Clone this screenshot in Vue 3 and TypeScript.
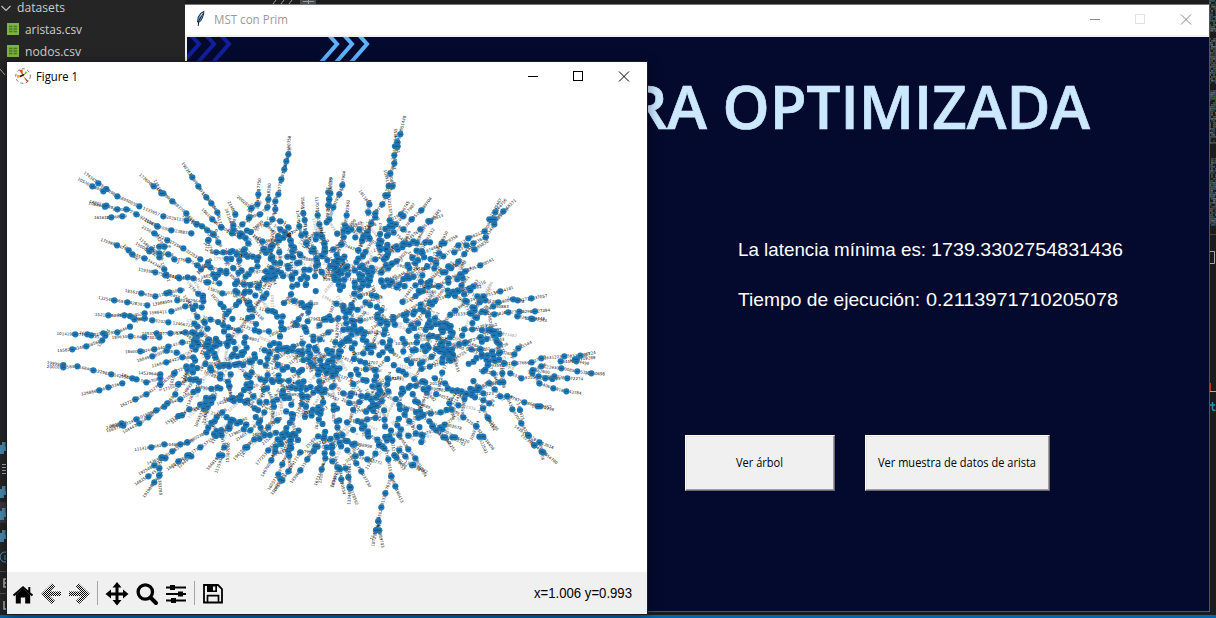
<script setup lang="ts">
type Pt = [number, number]
interface Tag { x: number; y: number; a: number; t: string; faint: boolean }

// Branches of the tree, listed from the outer tip inwards, in thirds of a pixel.
const branches: { ox: number; oy: number; lines: string[] }[] = [
  { ox: 30, oy: 100, lines: [
    '778,112 775,163 769,184 763,208 754,238 745,283 736,304 736,328 727,358 751,364 775,382',
    '460,192 487,232 505,259 529,292 544,310 562,337 574,382',
    '333,226 371,259 400,280 427,304 469,340 500,373 516,379 532,391 550,403 565,427',
    '375,240 394,280', '163,218 205,250 229,267 262,289 328,319 400,349 470,362',
    '148,238 187,259 220,274', '183,305 229,317 262,328 289,328 319,343 382,379 424,391 484,400',
    '180,310 225,320', '193,352 244,352 277,349', '345,360 382,379', '337,380 373,400 412,421 460,445 511,478',
    '217,420 261,436 296,451 307,463 343,475 403,508 409,524 448,535 490,535 530,547 568,550',
    '318,430 358,454 388,472', '330,415 364,448 388,460 415,463 433,478 475,481 502,496 541,502 571,512',
    '375,400 403,440 388,440', '326,508 376,517 406,526 446,532 473,532', '536,485 550,523 589,520',
    '290,573 334,580 376,589 418,577 451,571', '206,593 253,601 292,607 352,616 442,601 520,604',
    '400,577 409,580', '196,643 235,646 283,646 300,648 344,640 424,634 466,619 515,622',
    '280,640 313,658 367,661 415,667 502,679 532,686', '300,655 344,655',
    '85,701 136,703 172,703 184,706 220,700 262,697 300,680', '340,700 380,700 421,700 466,697 487,697',
    '250,712 302,709 343,712 388,712', '688,240 685,283 682,313 664,325', '718,255 715,298 712,322 690,343 658,352',
    '626,293 664,325 657,355 637,373', '597,305 616,343 610,376 630,406 655,430 640,454 628,481',
    '520,330 547,358 574,382 606,400 630,409', '818,295 820,340 824,360 826,400 829,430',
    '860,295 863,346 868,373 875,409 883,430 886,455', '903,232 895,277 898,298 896,316 890,367',
    '803,335 808,379 814,406', '727,395 724,439 724,472 733,487', '460,345 500,373', '590,330 610,390 632,400',
    '750,500 751,388 764,397 781,421 784,436 787,454 811,466', '545,460 535,421', '540,455 559,457 580,457 600,457',
    '538,565 577,580 622,577', '673,410 700,448 685,472', '676,385 710,373', '673,408 697,424 745,421'] },
  { ox: 320, oy: 100, lines: [
    '253,52 241,103 232,127 233,139 223,166 223,190 211,220 218,258 203,286 187,313 166,340 154,370 142,397 127,418 115,451',
    '227,90 225,139', '195,210 206,258 196,286', '72,218 67,256 58,283 40,322 28,358', '33,235 31,280 27,298 25,316',
    '122,275 148,313 145,337 166,352', '85,300 80,346 75,376 94,388', '330,297 304,331 275,358 250,388 227,373',
    '265,305 243,343 209,361 208,379', '280,315 250,349 218,380', '357,333 331,364 301,388 250,430 229,439 199,469 166,478',
    '368,345 325,363', '338,390 316,427 305,454 277,473 286,490', '408,410 373,430 307,460', '380,395 365,430 358,460',
    '557,298 526,337 516,358 494,394 445,415 415,436 370,469 322,499 268,535', '540,300 508,358',
    '583,303 550,334 523,373 497,412 460,430 433,462 415,485 385,499 368,517', '560,330 523,358',
    '500,425 463,448 440,436 403,457', '520,478 481,496 436,514 421,523 385,535 355,559 325,559 298,577',
    '492,547 460,559 451,571 415,574 385,586 330,607 280,643', '480,560 448,565 400,575',
    '575,563 541,574 490,589 440,604 406,632', '677,588 634,595 593,601 580,598 535,607 496,601 472,589',
    '685,630 645,634 598,635 565,637 523,643 496,637 450,640 391,644', '670,656 634,656 592,649', '680,662 638,657',
    '565,620 520,619 466,652', '540,690 514,694 482,712', '530,715 514,694', '508,640 513,690',
    '208,295 215,370 201,407 177,436', '240,430 268,433 330,427', '260,455 229,484 205,505 184,517',
    '66,380 64,433 40,448', '130,410 178,436 181,448 199,445', '60,480 79,503 65,520', '345,460 343,505 268,505',
    '320,490 307,526 260,535', '500,675 457,688 433,688', '330,682 345,655 380,672'] },
  { ox: 30, oy: 330, lines: [
    '83,62 127,58 169,49 217,31 226,17', '52,110 100,112 142,109 190,121 244,133 319,148 349,157 391,145',
    '52,98 100,105', '275,133 307,145', '155,192 208,181 235,172 277,160', '275,226 316,208 349,193 391,163 433,130 469,109',
    '233,302 280,287 319,268 379,241 403,230 436,193 445,163 481,148 499,148', '233,292 274,284',
    '283,305 328,280 355,262 412,220 451,208', '240,288 275,280', '407,280 445,258 478,238 522,235 541,205 562,173',
    '425,278 456,256', '497,290 526,220 550,202', '318,358 364,352 403,343 451,343 472,337 529,307 554,274 560,262 577,247',
    '352,400 400,383 427,364 472,337', '330,430 373,406 406,385', '315,463 355,439 388,415 394,382', '343,498 373,457 388,436',
    '392,490 388,436', '412,418 445,394 472,376 511,352 558,318', '445,412 484,379', '430,410 478,376', '535,415 567,376 583,352 575,316',
    '558,428 577,376', '592,393 598,296 572,310', '615,385 646,352 673,328 715,292 742,271', '635,380 652,352',
    '622,328 661,301 690,272 703,247', '682,400 715,361 743,328 769,294', '698,435 724,391 736,364 750,334',
    '718,475 745,433 757,403 775,364 796,316', '725,492 757,451 775,424 811,367', '735,480 751,448', '783,458 811,421 832,388 856,349',
    '856,465 875,418 886,385 880,325', '870,455 884,370', '905,470 928,415', '290,65 331,64 373,58 415,50 457,37 500,37',
    '322,92 367,79 410,62 440,68', '370,107 409,97 457,82 490,82', '400,180 445,163', '391,130 391,163', '437,117 433,130',
    '330,128 391,133', '580,205 604,208 598,169', '622,205 647,217 670,199 689,217', '635,180 661,172', '545,70 572,133 544,121',
    '650,265 622,280', '755,265 742,271'] },
  { ox: 320, oy: 330, lines: [
    '850,132 814,130 772,124 724,115 664,109 638,121', '822,68 781,77 733,79 664,85 635,97 583,100 553,100',
    '803,100 769,94 722,94', '825,82 765,88', '805,72 770,88', '788,147 742,145 703,139 656,139 604,145 571,130',
    '720,147 697,147 676,145', '688,127 638,121', '783,190 739,184 700,175 658,160 637,130', '630,38 595,55 583,73 540,67',
    '533,-5 532,37 537,70 520,79', '697,238 661,229 613,217 562,199 541,199 524,178', '690,232 653,229',
    '707,397 670,367 643,346 625,316 604,280 577,238 562,199', '700,353 658,337 625,316', '605,315 643,346', '588,290 625,316',
    '668,385 665,365', '594,220 600,240', '523,300 503,262 489,235 508,220 490,211', '530,296 505,265', '520,358 490,320 469,289 430,262 394,238 362,247',
    '498,365 478,320', '455,325 469,289', '443,335 405,322 367,298 328,274 304,259', '435,345 397,322', '402,360 376,322 349,301 337,289',
    '390,340 370,322', '315,435 286,385 265,358 238,316 232,286', '318,425 280,404', '300,420 276,406', '258,410 223,376 217,331', '250,415 229,382 238,361 256,379',
    '245,513 226,469 214,439 205,388 193,355 178,343', '158,648 168,601 175,574 184,532 196,490 214,439', '188,648 178,601 175,574',
    '180,580 169,600', '185,400 142,388 106,379 97,343', '148,467 124,424 109,400 82,361', '110,520 92,473 85,442 77,415', '87,523 89,473',
    '73,492 64,448 60,418 37,370', '38,468 52,412 37,394', '88,400 89,470', '163,375 178,343', '293,315 268,274 240,237', '130,320 133,289',
    '510,110 520,130 490,124', '500,160 508,160 540,157', '470,170 440,193 456,196', '520,190 490,190 476,172', '385,210 388,220 412,181',
    '330,160 375,160 345,145', '430,35 436,37 481,22', '470,70 454,58 481,58', '545,145 547,130 550,157'] },
  { ox: 190, oy: 220, lines: [
    '290,20 302,62 312,82 330,103', '395,20 394,48 403,72 403,96 412,120', '372,40 349,70 370,94 397,109', '440,110 454,73 505,91 532,37',
    '500,20 520,48 517,62', '570,60 569,78 589,88 590,112 574,157', '50,90 55,61 70,43', '60,120 54,127 33,148', '110,90 127,93 163,88',
    '240,100 245,78 224,88 247,111', '440,250 460,264 478,276 490,304 469,310', '440,340 445,295 424,300 402,298 388,316',
    '430,330 415,337 390,358 370,350', '340,280 326,297 317,309 344,322', '335,350 337,370 310,380 296,388', '430,390 436,367 451,374 448,394 418,400',
    '490,400 520,400 529,364 550,379', '478,480 490,492 520,480 505,463', '440,500 460,520 484,520 514,528', '460,540 478,549 508,546 529,532',
    '480,600 503,603 532,598 556,594', '580,480 595,478 592,492', '600,520 595,514', '425,440 436,460 430,498 403,515',
    '340,580 348,560 345,590', '250,460 267,483 245,480', '190,420 185,457 212,478', '240,570 250,545 231,505', '140,530 166,547', '120,460 118,498 124,538',
    '295,230 312,243 282,249 303,223', '380,250 361,253 355,276', '180,260 187,267 178,247', '620,370 645,370 640,394', '640,420 651,420 677,390 706,393',
    '700,420 697,427 725,410 742,388', '705,480 697,484', '590,300 571,310 562,295 574,271', '548,200 559,229 546,226', '600,190 604,187 620,202 582,199',
    '100,320 100,316 115,322 145,331', '157,350 166,352', '300,540 282,525 297,534', '310,490 304,502 334,498 361,501', '350,430 340,420 355,418 370,436',
    '270,410 293,394 325,394', '210,390 224,391 239,400 227,436', '245,430 260,411 263,388', '640,250 677,228 688,217 715,199 746,199',
    '640,280 648,300 684,310 672,324', '680,340 717,350 712,376', '750,340 753,370 781,352', '845,390 872,388', '845,360 824,370'] },
]

let state = 90210
const rnd = (): number => {
  state = (state + 0x6d2b79f5) | 0
  let t = Math.imul(state ^ (state >>> 15), 1 | state)
  t = (t + Math.imul(t ^ (t >>> 7), 61 | t)) ^ t
  return ((t ^ (t >>> 14)) >>> 0) / 4294967296
}
const num = (): string => String(1000000 + Math.floor(rnd() * 1200000)) + (rnd() > 0.5 ? String(Math.floor(rnd() * 9)) : '')

const nodes: Pt[] = []
const tags: Tag[] = []

function tagBetween(a: Pt, b: Pt, faint: boolean): void {
  const [l, r] = a[0] <= b[0] ? [a, b] : [b, a]
  const ang = (Math.atan2(r[1] - l[1], r[0] - l[0]) * 180) / Math.PI
  tags.push({ x: (l[0] + r[0]) / 2, y: (l[1] + r[1]) / 2, a: ang, t: num(), faint })
}

for (const g of branches) {
  for (const line of g.lines) {
    const pts = line.split(' ').map((s): Pt => {
      const [x, y] = s.split(',').map(Number)
      return [g.ox + x / 3, g.oy + y / 3]
    })
    pts.forEach((p, i) => {
      if (i === 0) return
      nodes.push(p)
      if (i === 1) {
        const q = pts[0]
        const d = Math.hypot(p[0] - q[0], p[1] - q[1]) || 1
        tagBetween(q, [q[0] + ((p[0] - q[0]) / d) * 17, q[1] + ((p[1] - q[1]) / d) * 17], false)
      } else tagBetween(pts[i - 1], p, false)
    })
  }
}

// Short chains that fill the core, roughly aligned with the direction from the centre.
const cx = 338
const cy = 338
function chain(x: number, y: number, n: number, spread: number): void {
  const base = Math.atan2(y - cy, x - cx) + (rnd() - 0.5) * spread
  let p: Pt = [x - Math.cos(base) * n * 3, y - Math.sin(base) * n * 3]
  for (let i = 0; i < n; i++) {
    nodes.push(p)
    const step = 4 + rnd() * 6
    const a = base + (rnd() - 0.5) * 1.2
    if (rnd() > 0.25) tagBetween(p, [p[0] + Math.cos(a) * 15, p[1] + Math.sin(a) * 15], rnd() > 0.6)
    p = [p[0] + Math.cos(a) * step, p[1] + Math.sin(a) * step]
  }
}
for (let gx = 188; gx < 505; gx += 14) {
  for (let gy = 228; gy < 462; gy += 12) {
    const x = gx + (rnd() - 0.5) * 18
    const y = gy + (rnd() - 0.5) * 16
    const k = ((x - 340) / 162) ** 2 + ((y - 342) / 118) ** 2
    if (k > 1 || rnd() < 0.12) continue
    chain(x, y, 1 + Math.floor(rnd() * 2.6), 2.4)
  }
}
const clumps: [number, number, number, number, number][] = [
  [332, 278, 10, 19, 12], [216, 347, 16, 12, 9], [330, 365, 12, 11, 9], [318, 402, 9, 12, 6],
  [365, 277, 8, 8, 6], [357, 336, 10, 6, 6], [298, 268, 12, 13, 7], [262, 277, 10, 4, 4],
  [254, 290, 14, 8, 5], [238, 361, 14, 6, 6], [385, 348, 8, 5, 4], [440, 325, 11, 7, 5],
  [445, 352, 8, 9, 5], [375, 395, 5, 14, 5], [218, 427, 10, 6, 4], [470, 391, 5, 5, 2],
  [412, 392, 12, 5, 3], [334, 442, 7, 5, 3], [240, 230, 7, 8, 2],
]
for (const [x, y, w, h, n] of clumps) {
  for (let i = 0; i < n; i++) chain(x + (rnd() - 0.5) * 2 * w, y + (rnd() - 0.5) * 2 * h, 2, 6)
}

const specks: { x: number; y: number; c: string }[] = []
const tones = ['#3a5064', '#2e5a60', '#5a4a3c', '#3f5a42', '#2b3b48', '#5a6670']
for (let y = 0; y < 226; y += 2) {
  if ((y > 31 && y < 38) || (y > 82 && y < 90) || (y > 142 && y < 158)) continue
  for (let x = 0; x < 7; x += 2) if (rnd() > 0.22) specks.push({ x, y, c: tones[Math.floor(rnd() * tones.length)] })
}
</script>

<template>
  <div class="screen">
    <aside class="explorer">
      <div class="row folder">
        <svg width="12" height="12" viewBox="0 0 12 12"><path d="M1.5 4 6 8.5 10.5 4" fill="none" stroke="#c5c5c5" stroke-width="1.1" /></svg>
        <svg class="lbl" width="70" height="18"><text x="0" y="12" textLength="48" lengthAdjust="spacingAndGlyphs">datasets</text></svg>
      </div>
      <div v-for="f in [{ n: 'aristas.csv', w: 57 }, { n: 'nodos.csv', w: 56 }]" :key="f.n" class="row file">
        <svg width="12" height="12" viewBox="0 0 12 12"><rect width="12" height="12" fill="#7cb342" /><path d="M2 3.5h3.5M6.500 3.5h3.5M2 6h3.5M6.500 6h3.5M2 8.500h3.5M6.500 8.500h3.5" stroke="#4a7a22" stroke-width="1.4" /></svg>
        <svg class="lbl" width="70" height="22"><text x="0" y="16" :textLength="f.w" lengthAdjust="spacingAndGlyphs">{{ f.n }}</text></svg>
      </div>
    </aside>
    <svg class="edge" width="7" height="556" viewBox="0 62 7 556">
      <path d="M0 69 5 75" stroke="#aaa" fill="none" />
      <rect y="502" width="7" height="21" fill="#37373d" />
      <g fill="#4b8bb0"><path v-for="y in [447, 491, 513, 535]" :key="y" :d="`M0 ${y - 2}h2v-3h3.500v5h1.500v4h-3v3h-4z`" /></g>
      <path d="M2 464.500h5M2 467.500h5M2 470.500h5M2 473.500h5" stroke="#aaa" />
      <circle cx="5" cy="557" r="5" fill="none" stroke="#4b9ccb" /><path d="M5 555v5" stroke="#4b9ccb" />
      <path d="M0 571.500h7M0 593.500h7" stroke="#505050" />
      <path d="M7 579h-3v8h3M4 583h3M4 601v8h3" fill="none" stroke="#bbb" stroke-width="1.500" />
    </svg>
    <svg class="tabs" width="70" height="5" viewBox="0 0 70 5">
      <rect x="28" width="16" height="4" fill="#45484c" /><path d="M1 4 4 0M9 4l3-4M17 4l3-4M31 1.500h11M36.500 0v4" stroke="#9a9a9a" fill="none" />
    </svg>
    <svg class="minimap" width="10" height="618" viewBox="0 0 10 618">
      <rect v-for="(s, i) in specks" :key="i" :x="s.x + 3" :y="s.y" width="2" height="1.7" :fill="s.c" />
      <path d="M4 234.500h6" stroke="#444" />
      <path d="M4 251.500h4.500v12h-4.500" fill="none" stroke="#aaa" />
      <path d="M4.500 383v8" stroke="#b33" /><path d="M4 391.500h6" stroke="#c8b82c" />
      <path d="M6.500 402v7q0 1.500 3 1.500M4 405h5" fill="none" stroke="#2596b5" stroke-width="1.400" />
    </svg>
    <div class="taskbar"></div>

    <section class="window main">
      <header class="bar">
        <svg class="feather" width="12" height="18" viewBox="0 0 12 18">
          <path d="M9 1.500Q5.500 2 3.200 7L2.500 12 4 12.500Q8 9.500 9 1.500Z" fill="#5b9bd5" stroke="#222" stroke-width="0.9" />
          <path d="M7.800 3.500 3.800 11 3.200 16" fill="none" stroke="#10233f" />
          <path d="M7.500 3 5.300 6.500" stroke="#b9dcf5" />
        </svg>
        <svg class="caption" width="90" height="30"><text x="0" y="19" textLength="74" lengthAdjust="spacingAndGlyphs">MST con Prim</text></svg>
        <svg class="controls" width="110" height="30" viewBox="1090 5 110 30">
          <path d="M1090 19.500h10" stroke="#888" /><rect x="1135.500" y="14.500" width="9" height="9" fill="none" stroke="#e2e2e2" />
          <path d="M1181 14.500 1191 24.500M1191 14.500 1181 24.500" stroke="#888" fill="none" />
        </svg>
      </header>
      <div class="content">
        <svg class="chevrons" width="200" height="30" viewBox="187 37 200 30">
          <g fill="none" stroke-width="4">
            <path v-for="x in [202, 217, 232]" :key="x" :d="`M${x - 12} 34 L${x - 3} 44 L${x - 23} 67`" stroke="#121f9c" />
            <path v-for="x in [340, 355, 370]" :key="x" :d="`M${x - 12} 34 L${x - 3} 44 L${x - 23} 67`" stroke="#5cb3fb" />
          </g>
        </svg>
        <svg class="headline" width="500" height="70"><text x="459" y="62" text-anchor="end" textLength="461" lengthAdjust="spacingAndGlyphs">RA OPTIMIZADA</text></svg>
        <div class="facts">
          <svg width="400" height="50"><text x="0" y="20" textLength="188" lengthAdjust="spacingAndGlyphs">La latencia mínima es:</text><text x="193" y="20" textLength="192" lengthAdjust="spacingAndGlyphs">1739.3302754831436</text></svg>
          <svg width="400" height="50"><text x="0" y="20" textLength="182" lengthAdjust="spacingAndGlyphs">Tiempo de ejecución:</text><text x="188" y="20" textLength="192" lengthAdjust="spacingAndGlyphs">0.2113971710205078</text></svg>
        </div>
        <div class="buttons">
          <button class="tk small"><svg width="54" height="24"><text x="3" y="16" textLength="47" lengthAdjust="spacingAndGlyphs">Ver árbol</text></svg></button>
          <button class="tk"><svg width="166" height="24"><text x="3" y="16" textLength="158" lengthAdjust="spacingAndGlyphs">Ver muestra de datos de arista</text></svg></button>
        </div>
      </div>
    </section>

    <section class="window figure">
      <header class="figbar">
        <svg width="16" height="16" viewBox="0 0 16 16">
          <circle cx="8" cy="8" r="7.300" fill="none" stroke="#777" stroke-dasharray="3 2.500" />
          <path d="M8 8 4 2 7.500 1.500Z" fill="#e8501c" /><path d="M8 8 1.500 6.500 2.500 10.500Z" fill="#f2b705" /><path d="M8 8 11 3 12 5Z" fill="#7ab51d" />
          <path d="M8 8 13.500 13 12 14Z" fill="#c63a12" /><path d="M5 8.500l4-2" stroke="#222" stroke-width="1.600" />
        </svg>
        <svg class="figname" width="60" height="30"><text x="0" y="19" textLength="42" lengthAdjust="spacingAndGlyphs">Figure 1</text></svg>
        <svg class="figctl" width="110" height="30" viewBox="527 62 110 30">
          <path d="M528 76.500h10" stroke="#000" /><rect x="573.500" y="71.500" width="9" height="9" fill="none" stroke="#000" />
          <path d="M619 71.500 629 81.500M629 71.500 619 81.500" stroke="#000" fill="none" />
        </svg>
      </header>
      <svg class="plot" width="640" height="480" viewBox="7 92 640 480">
        <g class="tags">
          <text v-for="(t, i) in tags" :key="i" :transform="`translate(${t.x.toFixed(1)} ${t.y.toFixed(1)}) rotate(${t.a.toFixed(1)})`" y="1.400" :class="{ faint: t.faint }">{{ t.t }}</text>
        </g>
        <g fill="#1f77b4"><circle v-for="(n, i) in nodes" :key="i" :cx="n[0]" :cy="n[1]" r="3.1" /></g>
        <g fill="#0d2c44" opacity="0.55"><rect v-for="(n, i) in nodes" :key="i" :x="n[0] - 1.500" :y="n[1] - 0.400" width="3" height="0.800" /></g>
      </svg>
      <footer class="tools">
        <svg width="230" height="42" viewBox="7 572 230 42">
          <defs><pattern id="dither" width="2" height="2" patternUnits="userSpaceOnUse"><rect width="1" height="1" /><rect x="1" y="1" width="1" height="1" /></pattern></defs>
          <path d="M23 588.500 30.200 594.800V603.500H25.200V597.500H20.800V603.500H15.800V594.800Z" />
          <path d="M13.500 595.500 23 587.300 32.500 595.500M29.300 587v5" fill="none" stroke="#000" stroke-width="2" />
          <g fill="none" stroke="url(#dither)" stroke-width="4.500"><path d="M53.500 585 44.500 593.800 53.500 602.500M45.500 593.800H61" /><path d="M77.500 585 86.500 593.800 77.500 602.500M85.500 593.800H69" /></g>
          <path d="M97.500 581v24M194.500 581v24" stroke="#a5a5a5" />
          <path d="M117 585v18M108 594h18" stroke="#000" stroke-width="3" /><path d="M117 582 121.500 587.500H112.500ZM117 605.500 121.500 600H112.500ZM105.500 594 111 589.500V598.500ZM128.500 594 123 589.500V598.500Z" />
          <circle cx="145.300" cy="592" r="7.200" fill="none" stroke="#000" stroke-width="3.300" /><path d="M150.500 597.500 156 603" stroke="#000" stroke-width="4" stroke-linecap="round" />
          <path d="M166 587.500h20M166 594h20M166 600.500h20" stroke="#000" stroke-width="1.800" /><path d="M170 585h5v5h-5zM178 591.500h5v5h-5zM171 598h5v5h-5z" />
          <path d="M204 585H218L222 589V602.500H204Z" fill="none" stroke="#000" stroke-width="1.800" /><path d="M207 585h10v7h-10z" /><path d="M213 586.500h2.300v4H213z" fill="#f0f0f0" /><path d="M207.500 602v-6.300h11V602" fill="none" stroke="#000" stroke-width="1.700" />
        </svg>
        <svg class="coords" width="100" height="42"><text x="1" y="26" textLength="98" lengthAdjust="spacingAndGlyphs">x=1.006 y=0.993</text></svg>
      </footer>
    </section>
  </div>
</template>

<style scoped>
.screen { position: relative; width: 1216px; height: 618px; overflow: hidden; background: #1c1c1c; font-family: "Open Sans", "Noto Sans", sans-serif; }
svg { display: block; flex: none; }
.explorer { width: 185px; height: 615px; background: #252526; display: flex; flex-direction: column; }
.row { display: flex; align-items: center; height: 22px; }
.folder { height: 18px; gap: 5px; }
.folder svg:first-child { margin-top: -3px; }
.file { padding-left: 7px; gap: 6px; }
.lbl { font-size: 13px; fill: #ccc; overflow: visible; }
.edge { position: absolute; left: 0; top: 62px; }
.tabs { position: absolute; left: 272px; top: 0; }
.minimap { position: absolute; right: 0; top: 0; }
.taskbar { position: absolute; left: 0; right: 0; bottom: 0; height: 3px; background: #0067b0; }
.window { position: absolute; display: flex; flex-direction: column; }
.main { left: 185px; top: 4px; width: 1024px; height: 606px; border: 1px solid #555; border-top-color: #777; border-left: 0; background: #040a2d; }
.bar { height: 30px; background: #fff; border-bottom: 2px solid #f0f0f0; display: flex; align-items: center; padding-left: 10px; }
.feather { margin-top: -2px; }
.caption { margin-left: 7px; font-size: 12px; fill: #999; }
.controls { margin-left: auto; margin-right: 9px; }
.content { flex: 1; border-left: 2px solid #f0f0f0; display: flex; flex-direction: column; }
.chevrons { height: 30px; }
.headline { margin: 0 0 0 444px; font-size: 59px; font-weight: 600; fill: #cbe8ff; stroke: #cbe8ff; stroke-width: 0.7px; overflow: visible; }
.facts { margin: 99px 0 0 551px; font-family: "Liberation Sans", Arial, sans-serif; font-size: 19px; fill: #fff; }
.buttons { margin: 99px 0 0 498px; display: flex; gap: 30px; }
.tk { box-sizing: border-box; width: 185px; height: 56px; padding: 0; border: 1px solid; border-color: #fff #696969 #696969 #fff; border-radius: 0; background: #f0f0f0; display: flex; align-items: center; justify-content: center; font: 12px "Open Sans", sans-serif; box-shadow: inset -1px -1px #a0a0a0, inset 1px 1px #e3e3e3; }
.small { width: 150px; }
.figure { left: 7px; top: 62px; width: 640px; height: 552px; background: #fff; box-shadow: 0 0 0 1px #1b1b22, 0 3px 12px rgba(0, 0, 0, 0.5); }
.figbar { height: 30px; display: flex; align-items: center; padding-left: 8px; }
.figbar svg:first-child { margin-top: -3px; }
.figname { margin-left: 5px; font-size: 12px; }
.figctl { margin-left: auto; margin-right: 10px; }
.tags { font-family: "DejaVu Sans", sans-serif; font-size: 4px; text-anchor: middle; fill: #111; }
.faint { opacity: 0.45; }
.tools { height: 42px; background: #f0f0f0; display: flex; justify-content: space-between; padding-right: 14px; }
.coords { font-family: "Liberation Sans", Arial, sans-serif; font-size: 14px; }
</style>

<style>
body { margin: 0; background: #1c1c1c; }
</style>
